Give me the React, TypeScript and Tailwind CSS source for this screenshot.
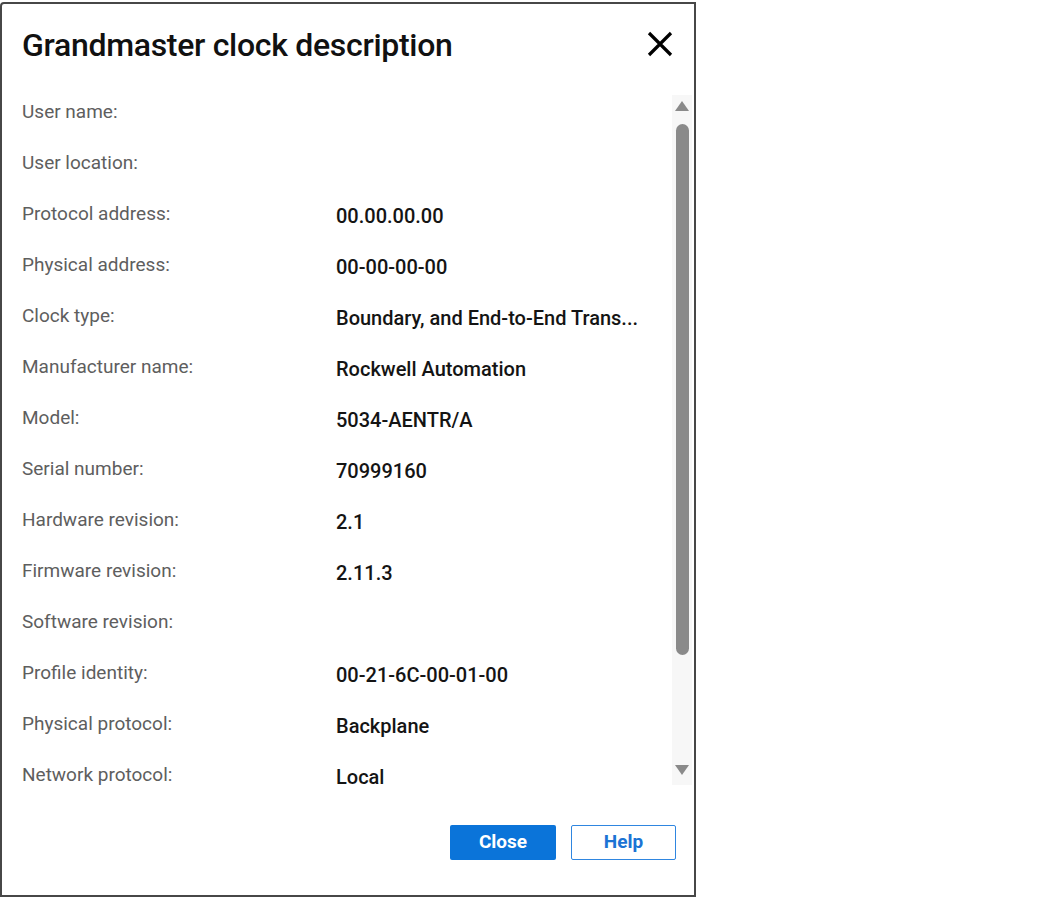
import React from "react";

const rows: [string, string][] = [
  ["User name:", ""],
  ["User location:", ""],
  ["Protocol address:", "00.00.00.00"],
  ["Physical address:", "00-00-00-00"],
  ["Clock type:", "Boundary, and End-to-End Trans..."],
  ["Manufacturer name:", "Rockwell Automation"],
  ["Model:", "5034-AENTR/A"],
  ["Serial number:", "70999160"],
  ["Hardware revision:", "2.1"],
  ["Firmware revision:", "2.11.3"],
  ["Software revision:", ""],
  ["Profile identity:", "00-21-6C-00-01-00"],
  ["Physical protocol:", "Backplane"],
  ["Network protocol:", "Local"],
];

const ScrollBar = () => (
  <div className="mt-[7px] mr-[2px] flex h-[690px] w-[20px] flex-col items-center bg-[#f7f7f7]">
    <svg width="16" height="12" viewBox="0 0 16 12" className="mt-[5px]">
      <path d="M8 1 L15 11 L1 11 Z" fill="#8a8a8a" />
    </svg>
    <div className="mt-[12px] h-[531px] w-[13px] rounded-full bg-[#8a8a8a]" />
    <div className="flex-1" />
    <svg width="16" height="12" viewBox="0 0 16 12" className="mb-[9px]">
      <path d="M1 1 L15 1 L8 11 Z" fill="#8a8a8a" />
    </svg>
  </div>
);

export default function App() {
  return (
    <div className="bg-white pt-[2px]" style={{ fontFamily: "Roboto, 'Noto Sans', sans-serif" }}>
      <div className="flex h-[895px] w-[696px] flex-col rounded-tl-[4px] border-2 border-[#474747] bg-white">
        {/* header */}
        <div className="flex h-[84px] items-center justify-between pl-[20px] pr-[20px]">
          <h1 className="-translate-y-[1px] text-[32px] font-medium tracking-[-0.3px] text-[#111]">
            Grandmaster clock description
          </h1>
          <svg width="28" height="28" viewBox="0 0 28 28" className="-translate-y-[2px]">
            <path d="M3 3 L25 25 M25 3 L3 25" stroke="#000" strokeWidth="3.2" />
          </svg>
        </div>

        {/* details list */}
        <div className="flex h-[714px]">
          <div className="flex-1 overflow-hidden pl-[20px]">
            {rows.map(([label, value]) => (
              <div key={label} className="flex h-[51px] items-center">
                <div className="w-[314px] -translate-y-[1px] text-[19px] text-[#5e5e5e]">{label}</div>
                <div className="text-[20px] font-medium text-[#141414]">{value}</div>
              </div>
            ))}
          </div>
          <ScrollBar />
        </div>

        {/* footer */}
        <div className="flex justify-end gap-[15px] pr-[18px] pt-[23px]">
          <button className="h-[35px] w-[106px] rounded-[2px] bg-[#0b74d9] text-[19px] font-bold text-white">
            Close
          </button>
          <button className="h-[35px] w-[105px] rounded-[2px] border-[1.5px] border-[#2f86e0] bg-white text-[19px] font-bold text-[#1c74d4]">
            Help
          </button>
        </div>
      </div>
    </div>
  );
}
